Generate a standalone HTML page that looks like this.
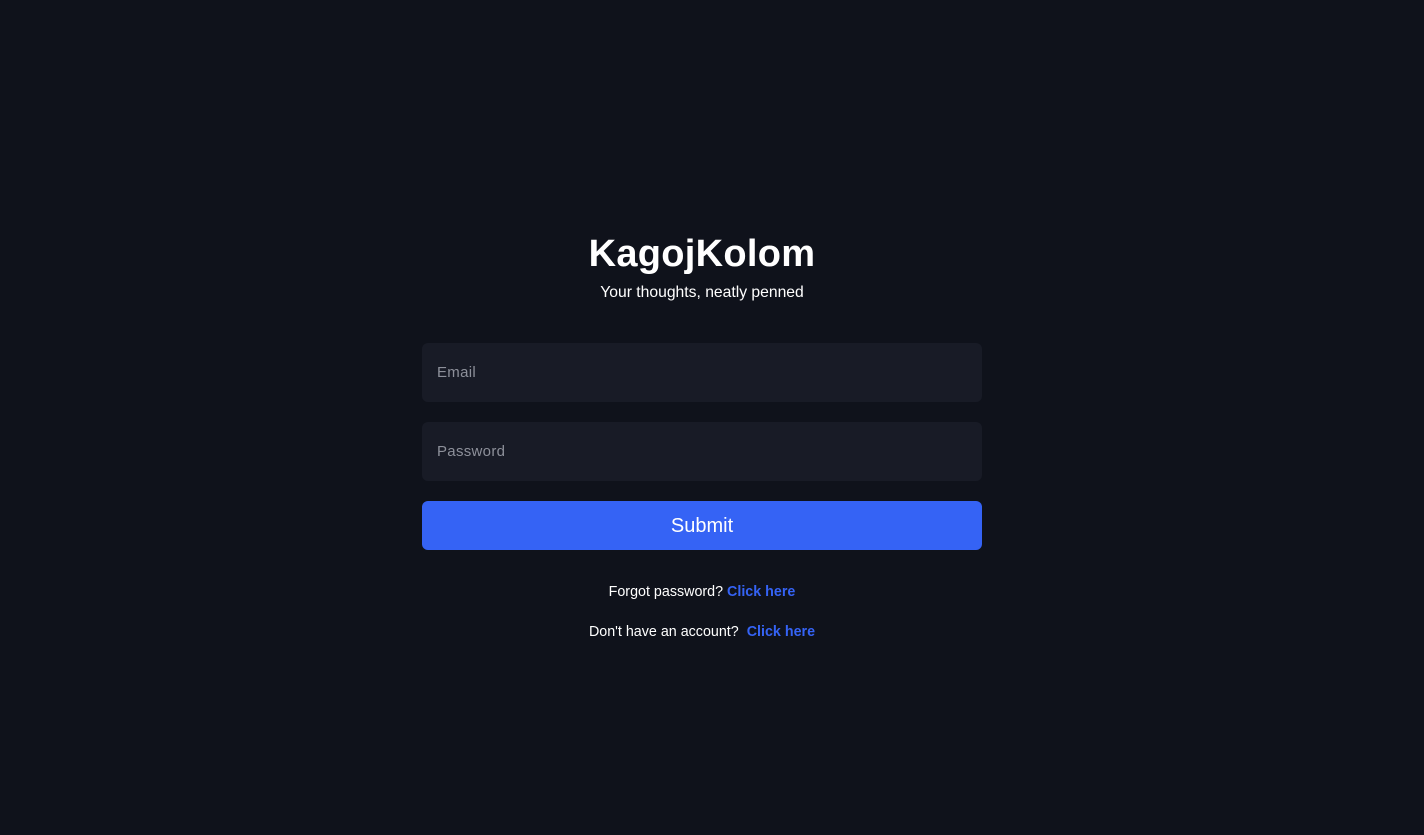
<!DOCTYPE html>
<html><head><meta charset="utf-8"><style>
html,body{margin:0;padding:0;width:1424px;height:835px;background:#0f121b;overflow:hidden;font-family:"Liberation Sans",sans-serif;color:#fff}
.t{position:absolute;left:0;width:1404px;text-align:center}
h1{position:absolute;left:0;width:1404px;text-align:center;top:229px;margin:0;font-size:38px;font-weight:bold;line-height:50px;letter-spacing:0.3px}
.sub{top:284px;font-size:15.7px;line-height:18px}
.in{position:absolute;left:422px;width:560px;height:59px;background:#181b26;border-radius:6px;color:#8d909a;font-size:15px;line-height:60px;box-sizing:border-box;padding-left:15px;letter-spacing:0.3px}
.btn{position:absolute;left:422px;top:501px;width:560px;height:49px;background:#3563f5;border-radius:6px;text-align:center;line-height:51px;font-size:20px}
.l{font-size:14.3px;line-height:18px}
.l b{color:#3563f5}
</style></head><body>
<h1>KagojKolom</h1>
<div class="t sub">Your thoughts, neatly penned</div>
<div class="in" style="top:343px">Email</div>
<div class="in" style="top:422px">Password</div>
<div class="btn">Submit</div>
<div class="t l" style="top:583px">Forgot password? <b>Click here</b></div>
<div class="t l" style="top:623px">Don't have an account?&nbsp; <b>Click here</b></div>
</body></html>
